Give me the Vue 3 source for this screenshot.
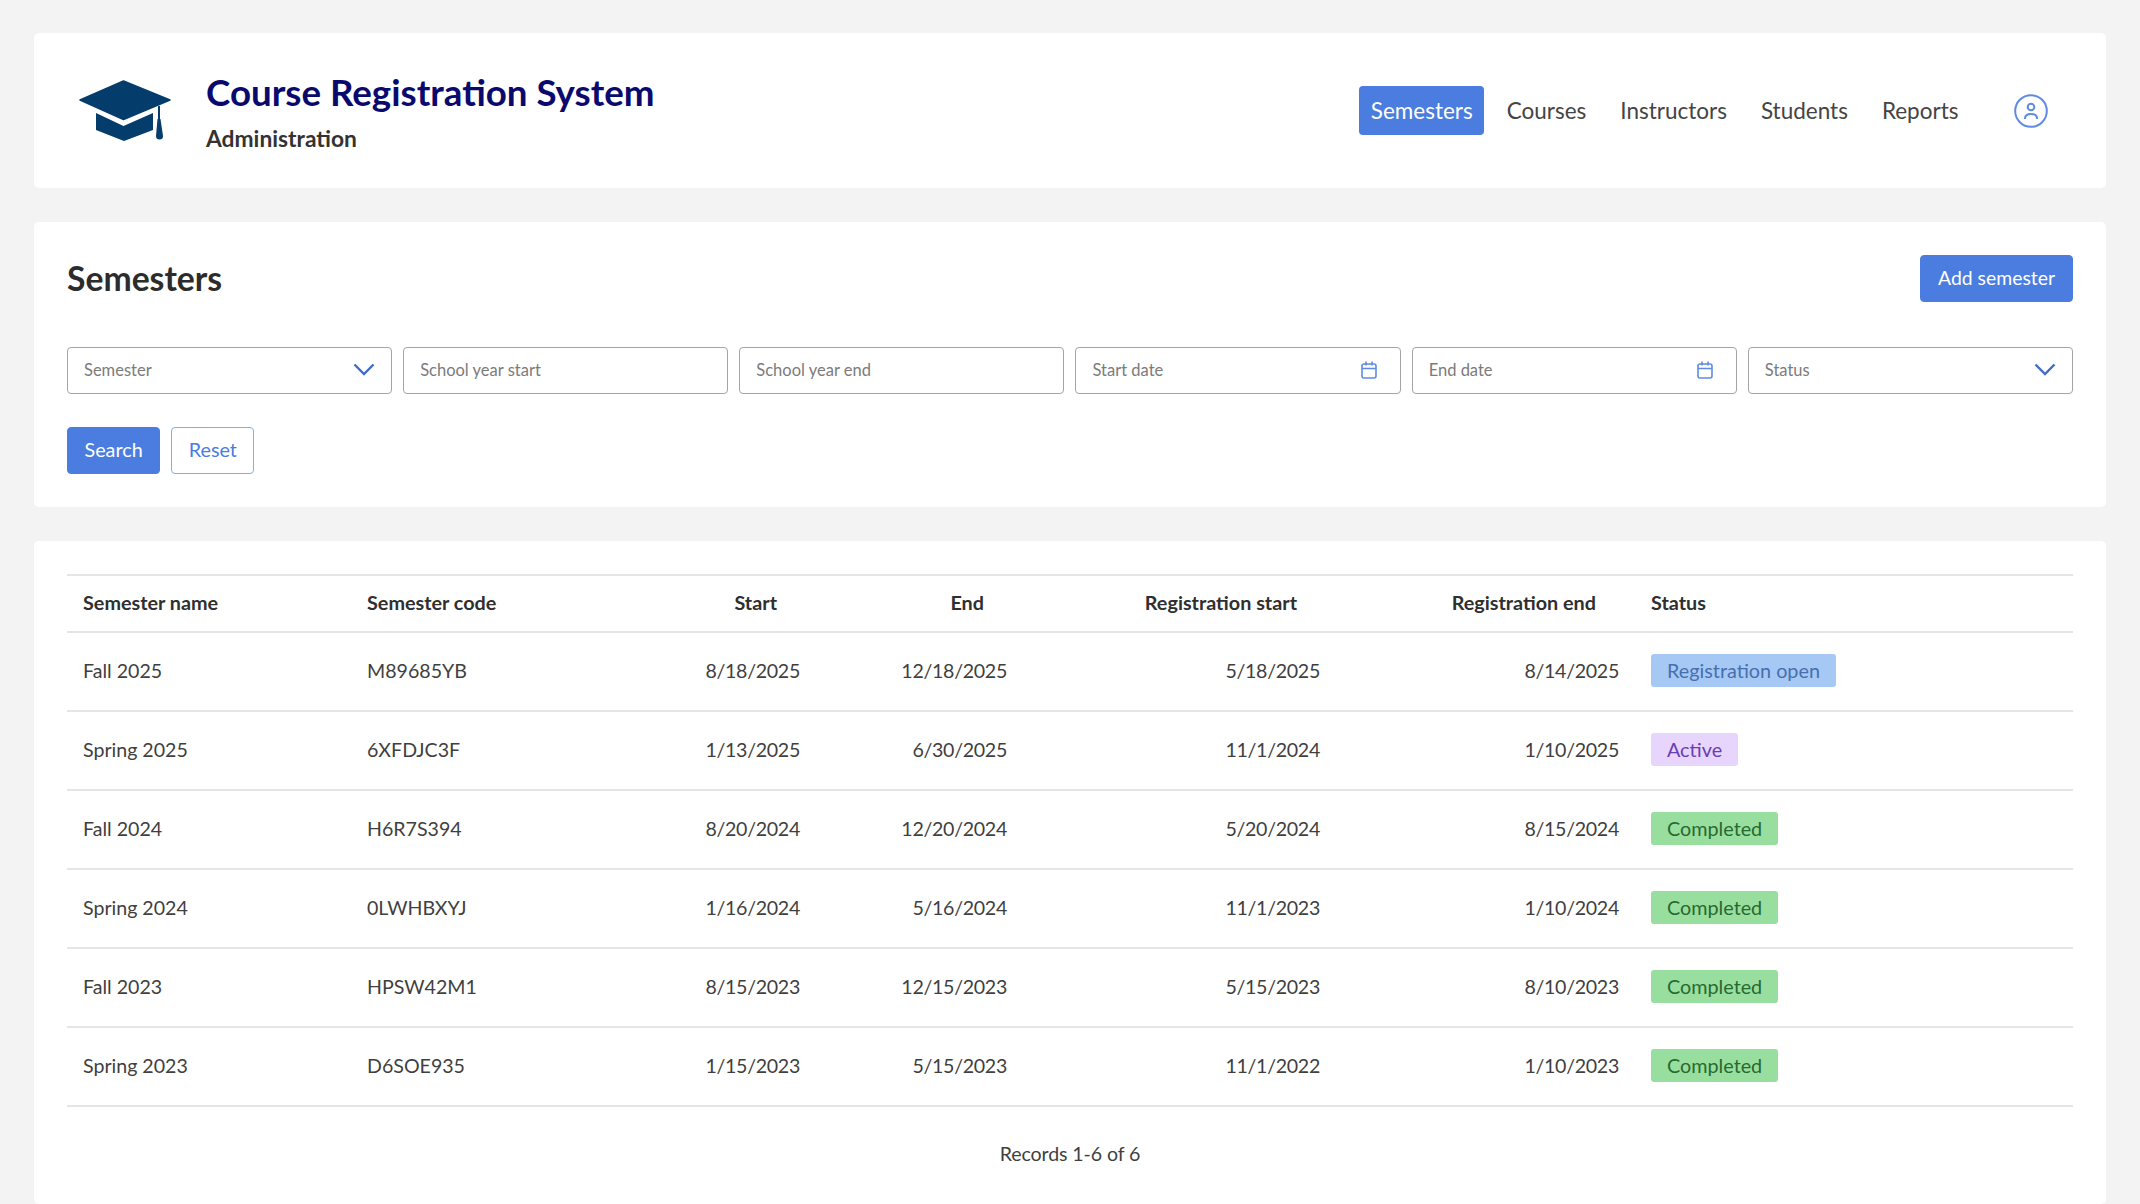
<script setup>
const navItems = ['Semesters', 'Courses', 'Instructors', 'Students', 'Reports']

const columns = [
  { label: 'Semester name', key: 'name' },
  { label: 'Semester code', key: 'code' },
  { label: 'Start', key: 'start', num: true },
  { label: 'End', key: 'end', num: true },
  { label: 'Registration start', key: 'regStart', num: true },
  { label: 'Registration end', key: 'regEnd', num: true },
  { label: 'Status', key: 'status' }
]

const rows = [
  { name: 'Fall 2025', code: 'M89685YB', start: '8/18/2025', end: '12/18/2025', regStart: '5/18/2025', regEnd: '8/14/2025', status: 'Registration open', tone: 'open' },
  { name: 'Spring 2025', code: '6XFDJC3F', start: '1/13/2025', end: '6/30/2025', regStart: '11/1/2024', regEnd: '1/10/2025', status: 'Active', tone: 'active' },
  { name: 'Fall 2024', code: 'H6R7S394', start: '8/20/2024', end: '12/20/2024', regStart: '5/20/2024', regEnd: '8/15/2024', status: 'Completed', tone: 'done' },
  { name: 'Spring 2024', code: '0LWHBXYJ', start: '1/16/2024', end: '5/16/2024', regStart: '11/1/2023', regEnd: '1/10/2024', status: 'Completed', tone: 'done' },
  { name: 'Fall 2023', code: 'HPSW42M1', start: '8/15/2023', end: '12/15/2023', regStart: '5/15/2023', regEnd: '8/10/2023', status: 'Completed', tone: 'done' },
  { name: 'Spring 2023', code: 'D6SOE935', start: '1/15/2023', end: '5/15/2023', regStart: '11/1/2022', regEnd: '1/10/2023', status: 'Completed', tone: 'done' }
]

const filters = [
  { label: 'Semester', icon: 'chevron' },
  { label: 'School year start' },
  { label: 'School year end' },
  { label: 'Start date', icon: 'calendar' },
  { label: 'End date', icon: 'calendar' },
  { label: 'Status', icon: 'chevron' }
]
</script>

<template>
  <div class="page">
    <header class="card topbar">
      <div class="brand">
        <svg class="logo" viewBox="0 0 92 61" aria-hidden="true">
          <path d="M44.5 1 91 20 44.5 39.5 1 20Z" fill="#043c6c" stroke="#043c6c" stroke-width="1.5" stroke-linejoin="round" />
          <path d="M17 33 44.5 46 74 33V50L45 61 17 50Z" fill="#043c6c" />
          <path d="M80 26V42" stroke="#043c6c" stroke-width="2" />
          <path d="M78.5 39h3L84 56a3.5 3.5 0 0 1-7 0Z" fill="#043c6c" />
        </svg>
        <div class="brand-text">
          <div class="brand-title">Course Registration System</div>
          <div class="brand-sub">Administration</div>
        </div>
      </div>
      <nav class="nav">
        <a v-for="(item, i) in navItems" :key="item" class="nav-item" :class="{ current: i === 0 }">{{ item }}</a>
        <svg class="avatar" viewBox="0 0 34 34" fill="none" stroke="#5f8be3" aria-hidden="true">
          <circle cx="17" cy="17" r="15.8" stroke-width="2" />
          <circle cx="17" cy="13" r="3.3" stroke-width="2" />
          <path d="M11 25v-.5c0-3 2.5-4.500 6-4.500s6 1.500 6 4.500v.5" stroke-width="2" />
        </svg>
      </nav>
    </header>

    <section class="card search">
      <div class="search-head">
        <h1>Semesters</h1>
        <button class="btn primary">Add semester</button>
      </div>
      <div class="filters">
        <div v-for="f in filters" :key="f.label" class="field">
          <span>{{ f.label }}</span>
          <svg v-if="f.icon === 'chevron'" class="chevron" viewBox="0 0 22 13" fill="none" stroke="#3f6fc8" stroke-width="2.4" aria-hidden="true">
            <path d="M1.500 1.500 11 11 20.500 1.500" />
          </svg>
          <svg v-if="f.icon === 'calendar'" class="calendar" viewBox="0 0 16 18" fill="none" stroke="#5f8be3" stroke-width="1.6" aria-hidden="true">
            <rect x="1" y="3" width="14" height="14" rx="2" />
            <path d="M1 7.500h14M5 .5v4M11 .5v4" />
          </svg>
        </div>
      </div>
      <div class="actions">
        <button class="btn primary">Search</button>
        <button class="btn outline">Reset</button>
      </div>
    </section>

    <section class="card results">
      <table>
        <colgroup>
          <col class="c-name" /><col class="c-code" /><col class="c-start" /><col class="c-end" />
          <col class="c-reg" /><col class="c-regend" /><col />
        </colgroup>
        <thead>
          <tr>
            <th v-for="c in columns" :key="c.key" :class="{ num: c.num }">{{ c.label }}</th>
          </tr>
        </thead>
        <tbody>
          <tr v-for="r in rows" :key="r.code">
            <td v-for="c in columns" :key="c.key" :class="{ num: c.num }">
              <span v-if="c.key === 'status'" class="badge" :class="r.tone">{{ r.status }}</span>
              <template v-else>{{ r[c.key] }}</template>
            </td>
          </tr>
        </tbody>
      </table>
      <div class="records">Records 1-6 of 6</div>
    </section>
  </div>
</template>

<style>
html, body {
  margin: 0;
  background: #f3f3f3;
}
</style>

<style scoped>
.page {
  display: flex;
  flex-direction: column;
  gap: 34px;
  padding: 33px 34px 0;
  font-family: Lato, "Open Sans", sans-serif;
  font-size: 19.6px;
  color: #3f3f3f;
}

.card {
  background: #fff;
  border-radius: 5px;
}

.topbar {
  display: flex;
  align-items: center;
  justify-content: space-between;
  height: 155px;
  padding: 0 58px 0 45px;
}

.brand {
  display: flex;
  align-items: center;
  gap: 35px;
}

.logo {
  width: 92px;
  height: 61px;
  flex: none;
}

.brand-title {
  font-size: 36.7px;
  font-weight: 700;
  line-height: 46px;
  color: #0a0a6e;
}

.brand-sub {
  margin-top: 8px;
  font-size: 22.8px;
  font-weight: 700;
  line-height: 30px;
  color: #333;
}

.nav {
  display: flex;
  align-items: center;
  font-size: 22.5px;
}

.nav-item {
  padding: 0 11.5px;
  height: 49px;
  display: flex;
  align-items: center;
  margin-right: 11px;
  border-radius: 4px;
  color: #444;
}

.nav-item.current {
  background: #4a7ddf;
  color: #fff;
}

.avatar {
  width: 34px;
  height: 34px;
  margin-left: 33px;
}

.search {
  padding: 33px 33px 33px;
}

.search-head {
  display: flex;
  align-items: center;
  justify-content: space-between;
  height: 47px;
}

h1 {
  margin: 0;
  padding-bottom: 2px;
  font-size: 33.7px;
  font-weight: 700;
  color: #2c2c2c;
}

.btn {
  height: 47px;
  padding: 0 17px 2px;
  border-radius: 4px;
  border: 1.5px solid #4a7ddf;
  font: inherit;
  font-size: 19.4px;
}

.btn.primary {
  background: #4a7ddf;
  color: #fff;
}

.btn.outline {
  background: #fff;
  border-color: #8aa9ea;
  color: #4a7ddf;
}

.filters {
  display: grid;
  grid-template-columns: repeat(6, 1fr);
  gap: 11px;
  margin-top: 45px;
}

.field {
  display: flex;
  align-items: center;
  justify-content: space-between;
  height: 47px;
  box-sizing: border-box;
  padding: 0 16px 2px;
  border: 1.5px solid #a4a4a4;
  border-radius: 4px;
  font-size: 16.5px;
  color: #7b7b7b;
}

.chevron {
  width: 22px;
  height: 13px;
}

.calendar {
  width: 16px;
  height: 18px;
  margin-right: 7px;
}

.actions {
  display: flex;
  gap: 11px;
  margin-top: 33px;
}

.actions .btn {
  padding: 0 16.5px 3px;
  font-size: 19.8px;
}

.results {
  padding: 33px 33px 0;
  height: 630px;
}

table {
  width: 100%;
  border-collapse: collapse;
  table-layout: fixed;
}

.c-name { width: 284px; }
.c-code { width: 285px; }
.c-start { width: 180px; }
.c-end { width: 207px; }
.c-reg { width: 313px; }
.c-regend { width: 299px; }

th, td {
  box-sizing: border-box;
  padding: 0 16px 3px;
  text-align: left;
  border-bottom: 2px solid #e5e5e5;
}

thead tr {
  border-top: 2px solid #e5e5e5;
}

th {
  height: 57px;
  font-size: 19.8px;
  font-weight: 700;
  color: #2f2f2f;
}

td {
  height: 79px;
}

th.num {
  text-align: right;
  padding-right: 39px;
}

td.num {
  text-align: right;
  letter-spacing: -0.3px;
}

.badge {
  display: inline-block;
  padding: 0 16px;
  line-height: 33px;
  border-radius: 3px;
  font-size: 19.8px;
}

.badge.open {
  background: #a6c8f5;
  color: #466fae;
}

.badge.active {
  background: #e8d5fd;
  color: #6a3db0;
}

.badge.done {
  background: #98df9f;
  color: #28692f;
}

.records {
  margin-top: 35px;
  text-align: center;
  letter-spacing: -0.1px;
}
</style>
